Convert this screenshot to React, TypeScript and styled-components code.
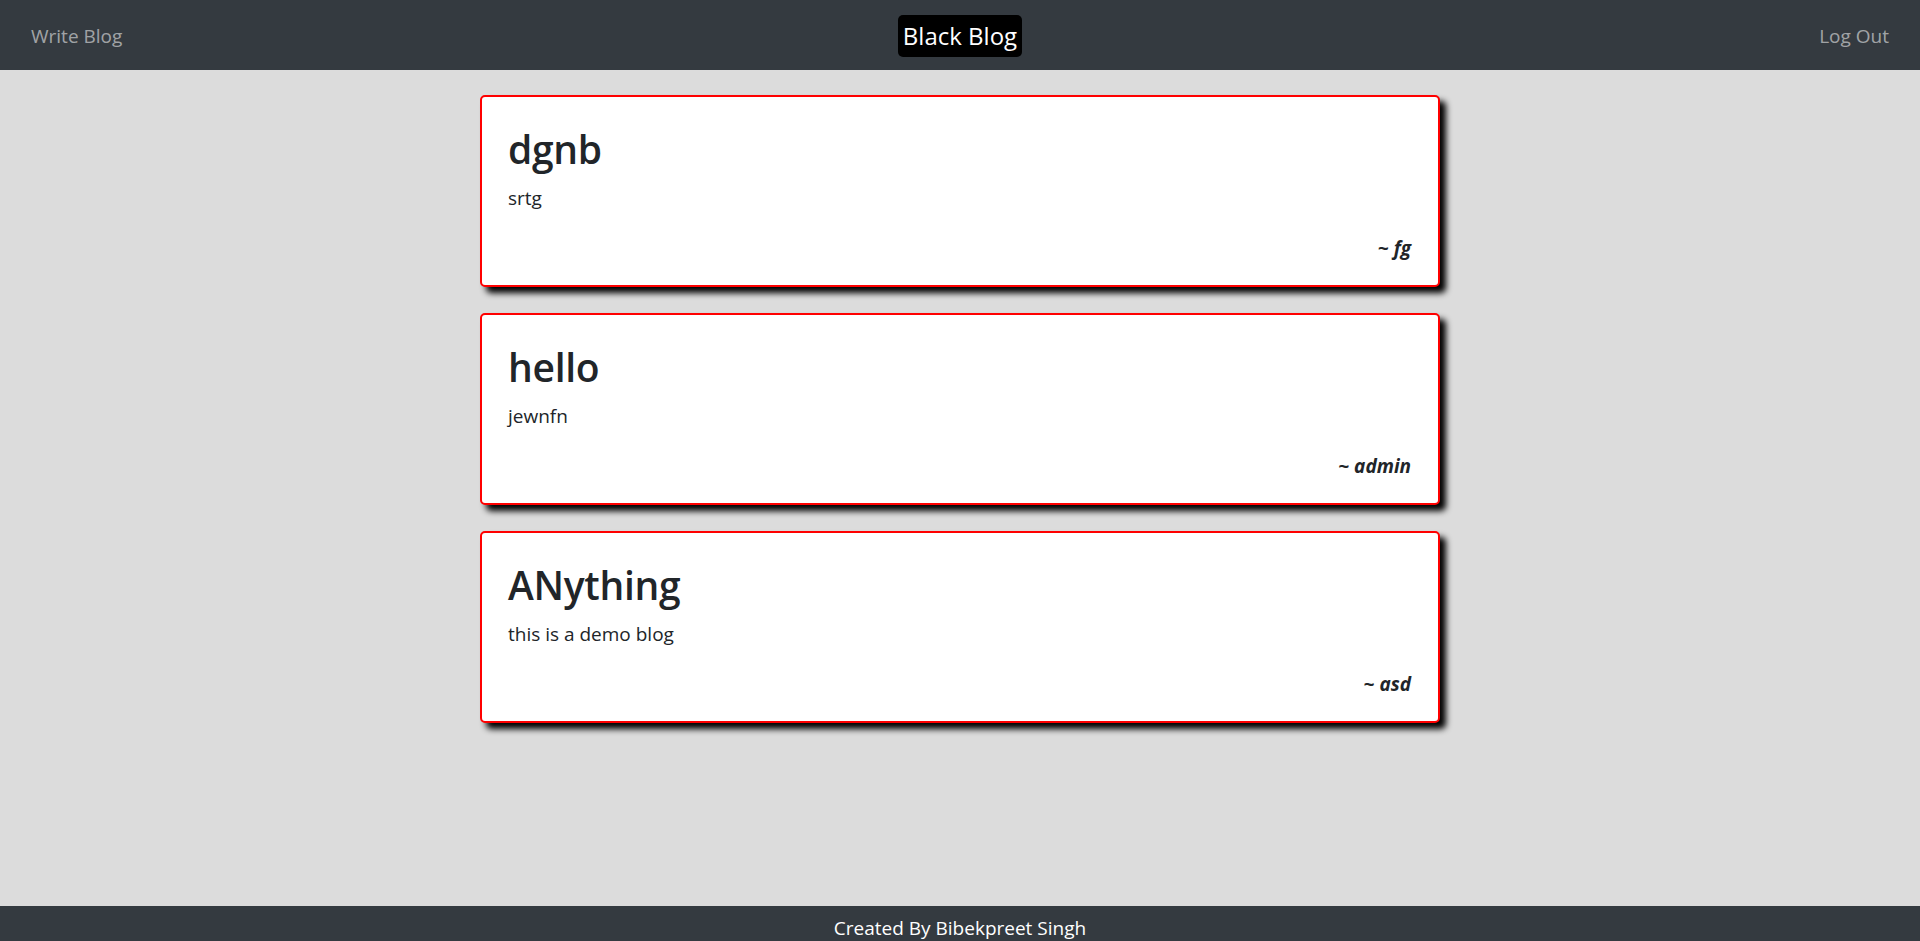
import React from "react";
import styled, { createGlobalStyle } from "styled-components";

const GlobalStyle = createGlobalStyle`
  html, body {
    margin: 0;
    padding: 0;
    background: #dcdcdc;
    font-family: "Open Sans", "Noto Sans", "Liberation Sans", sans-serif;
    color: #212529;
  }
  * { box-sizing: border-box; }
`;

const Page = styled.div`
  min-height: 100vh;
  display: flex;
  flex-direction: column;
`;

const NavBar = styled.nav`
  height: 70px;
  background: #343a40;
  display: grid;
  grid-template-columns: 1fr auto 1fr;
  align-items: center;
  padding: 0 31px 0 31px;
`;

const NavLink = styled.a<{ $align: "left" | "right" }>`
  justify-self: ${(p) => (p.$align === "left" ? "start" : "end")};
  color: rgba(255, 255, 255, 0.55);
  font-size: 19px;
  line-height: 30px;
  text-decoration: none;
  cursor: pointer;
  margin-top: 2px;
`;

const Brand = styled.a`
  background: #000;
  color: #fff;
  font-size: 24px;
  line-height: 34px;
  padding: 4px 5px;
  border-radius: 5px;
  text-decoration: none;
  margin-top: 1px;
`;

const Main = styled.main`
  flex: 1;
  display: flex;
  flex-direction: column;
  align-items: center;
  gap: 26px;
  padding: 25px 0 40px;
`;

const Card = styled.article`
  width: 960px;
  background: #fff;
  border: 2px solid #ff0000;
  border-radius: 5px;
  box-shadow: 6px 6px 6px #000;
  padding: 28px 27px 22px 26px;
  display: flex;
  flex-direction: column;
`;

const Title = styled.h1`
  margin: 0 0 10px;
  font-size: 39px;
  line-height: 48px;
  font-weight: 600;
  letter-spacing: -0.3px;
`;

const Body = styled.p`
  margin: 0 0 20px;
  font-size: 19px;
  line-height: 30px;
  font-weight: 400;
`;

const Author = styled.p`
  margin: 0;
  align-self: flex-end;
  font-size: 19px;
  line-height: 30px;
  font-weight: 700;
  font-style: italic;
`;

const Footer = styled.footer`
  height: 35px;
  overflow: hidden;
  background: #343a40;
  color: #fff;
  text-align: center;
  font-size: 19px;
  line-height: 30px;
  padding-top: 7px;
`;

const posts = [
  { title: "dgnb", body: "srtg", author: "fg" },
  { title: "hello", body: "jewnfn", author: "admin" },
  { title: "ANything", body: "this is a demo blog", author: "asd" },
];

export default function App() {
  return (
    <Page>
      <GlobalStyle />
      <NavBar>
        <NavLink $align="left">Write Blog</NavLink>
        <Brand>Black Blog</Brand>
        <NavLink $align="right">Log Out</NavLink>
      </NavBar>
      <Main>
        {posts.map((p) => (
          <Card key={p.title}>
            <Title>{p.title}</Title>
            <Body>{p.body}</Body>
            <Author>~ {p.author}</Author>
          </Card>
        ))}
      </Main>
      <Footer>Created By Bibekpreet Singh</Footer>
    </Page>
  );
}
